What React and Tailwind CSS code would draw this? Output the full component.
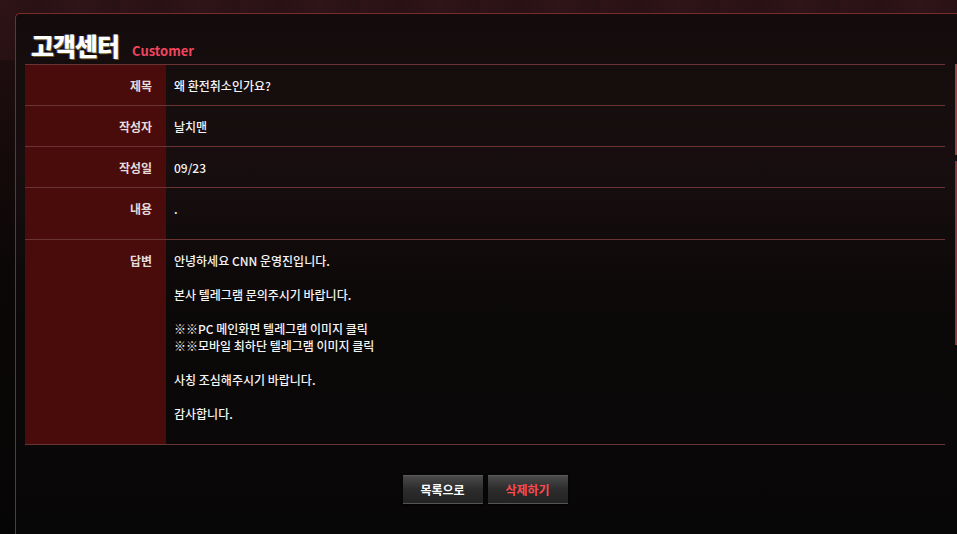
import React from "react";

const rows = [
  { label: "제목", value: "왜 환전취소인가요?", h: "h-[41px]" },
  { label: "작성자", value: "날치맨", h: "h-[41px]" },
  { label: "작성일", value: "09/23", h: "h-[41px]" },
  { label: "내용", value: ".", h: "h-[52px]" },
];

const answer = [
  "안녕하세요 CNN 운영진입니다.",
  "",
  "본사 텔레그램 문의주시기 바랍니다.",
  "",
  "※※PC 메인화면 텔레그램 이미지 클릭",
  "※※모바일 최하단 텔레그램 이미지 클릭",
  "",
  "사칭 조심해주시기 바랍니다.",
  "",
  "감사합니다.",
];

function App() {
  return (
    <div
      className="relative w-[957px] h-[534px] overflow-hidden bg-[linear-gradient(180deg,#2a1214_0px,#1e0d0e_60px,#0c0707_260px,#060505_534px)] text-[#eeeeee]"
      style={{ fontFamily: '"Noto Sans CJK KR", "Noto Sans", sans-serif' }}
    >
      {/* curtain folds up top */}
      <div className="absolute inset-x-0 top-0 h-[60px] bg-[repeating-linear-gradient(90deg,#33151a_0px,#2a1114_40px,#37181c_80px,#2a1114_120px)] opacity-50" />

      <div className="relative ml-[15px] mt-[13px] w-[960px] h-[540px] rounded-tl-[5px] border-l border-t border-[#7c2b2b] bg-[linear-gradient(180deg,#140c0c_0px,#180e0f_150px,#0b0808_300px,#080707_534px)] px-[9px]">
        <div className="flex items-end gap-[13px] h-[50px] pl-[6px] pb-[6px]">
          <span className="text-[25px] font-black leading-none text-white tracking-[-1px] [text-shadow:1px_1px_0_#6a5a20,-1px_0_0_#3050a0]">
            고객센터
          </span>
          <span className="text-[13px] font-bold leading-none text-[#f0455d] mb-[1px]">Customer</span>
        </div>

        <div className="w-[920px] border-t border-[#6a3434]">
          {rows.map((r) => (
            <div key={r.label} className={`flex ${r.h} border-b border-[#6a3434]`}>
              <div className="w-[141px] bg-[#4a0b0b] pr-[14px] pt-[12px] text-right text-[12px] font-bold leading-[17px] text-[#e4dcdc]">
                {r.label}
              </div>
              <div className="flex-1 pl-[8px] pt-[12px] text-[12px] font-medium leading-[17px] text-[#f4f4f4]">{r.value}</div>
            </div>
          ))}
          <div className="flex h-[205px] border-b border-[#6a3434]">
            <div className="w-[141px] bg-[#4a0b0b] pr-[14px] pt-[12px] text-right text-[12px] font-bold leading-[17px] text-[#e4dcdc]">
              답변
            </div>
            <div className="flex-1 pl-[8px] pt-[12px] text-[12px] font-medium leading-[17px] text-[#f4f4f4]">
              {answer.map((line, i) => (
                <div key={i} className="h-[17px]">
                  {line}
                </div>
              ))}
            </div>
          </div>
        </div>

        <div className="flex w-[920px] justify-center gap-[5px] pt-[30px]">
          <button className="w-[80px] h-[29px] bg-[linear-gradient(180deg,#4a4a4a,#2c2c2c_50%,#232323)] border-t border-[#5a5a5a] border-b border-b-[#555] text-[12px] font-bold text-white shadow-[0_1px_2px_#000]">
            목록으로
          </button>
          <button className="w-[80px] h-[29px] bg-[linear-gradient(180deg,#4a4a4a,#2c2c2c_50%,#232323)] border-t border-[#5a5a5a] border-b border-b-[#555] text-[12px] font-bold text-[#ff4a4f] shadow-[0_1px_2px_#000]">
            삭제하기
          </button>
        </div>
      </div>

      {/* right side sliver peeking in from the next panel */}
      <div className="absolute right-0 top-[64px] w-[2px] h-[91px] bg-[#9b4444]" />
      <div className="absolute right-0 top-[161px] w-[2px] h-[184px] bg-[#8a3a3a]" />
    </div>
  );
}

export default App;
